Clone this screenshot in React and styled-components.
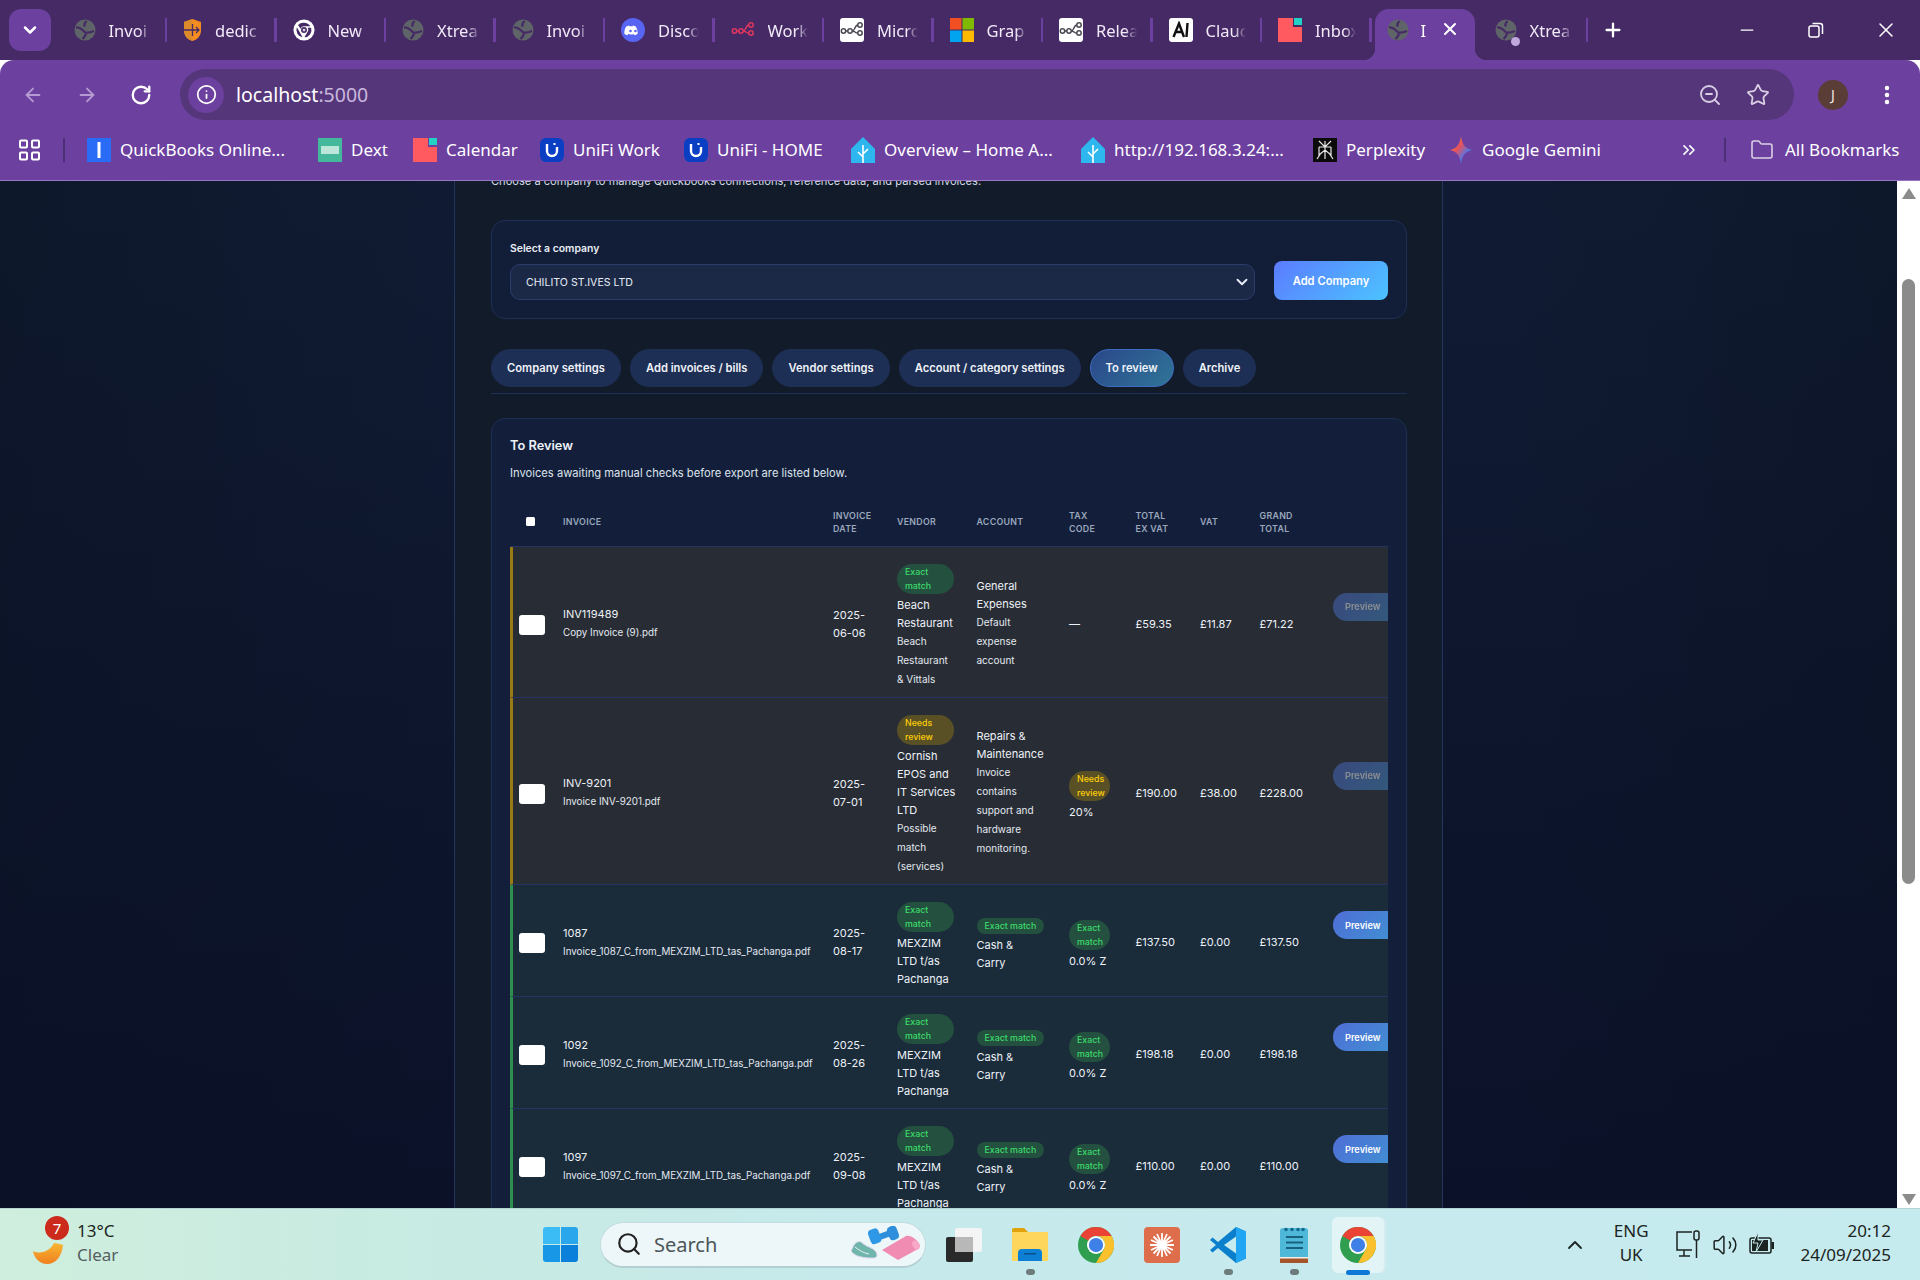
import React from 'react';
import styled, { createGlobalStyle } from 'styled-components';
import {
  ArrowLeft, ArrowRight, RotateCw, Info, ZoomOut, Star, MoreVertical, X, Minus, Plus,
  ChevronDown, ChevronsRight, Folder, Search as SearchIcon, ChevronUp, Volume2,
} from 'lucide-react';

const GlobalStyle = createGlobalStyle`
  html, body { margin: 0; padding: 0; height: 100%; overflow: hidden; }
  #root { height: 1280px; }
  * { box-sizing: border-box; }
`;

const uiFont = '"Noto Sans", "Open Sans", sans-serif';
const pageFont = 'Inter, "Liberation Sans", sans-serif';

/* ---------- little logos ---------- */

const Globe = ({ size = 22 }) => (
  <svg width={size} height={size} viewBox="0 0 22 22">
    <circle cx="11" cy="11" r="10.500" fill="#5f6468" />
    <path d="M2 8.500c4-1 6 2 8 4s5 1.500 10-.5M12.500 2c-1.500 2-3.500 3-1.500 5.500M8.500 20c1.500-2 3.500-3 3.500-6.500" stroke="#452a65" strokeWidth="2.200" fill="none" />
  </svg>
);

const ChromeLogo = ({ size = 36 }) => (
  <svg width={size} height={size} viewBox="0 0 48 48">
    <circle cx="24" cy="24" r="24" fill="#2f9e4f" />
    <path d="M24 0a24 24 0 0 1 20.800 12H24a12 12 0 0 0-10.400 6L3.200 12A24 24 0 0 1 24 0z" fill="#ea4335" />
    <path d="M44.800 12A24 24 0 0 1 24 48l10.400-18A12 12 0 0 0 24 12z" fill="#fbc02d" />
    <circle cx="24" cy="24" r="12" fill="#fff" />
    <circle cx="24" cy="24" r="9.500" fill="#3f7fe8" />
  </svg>
);

const ChromeMono = () => (
  <svg width="22" height="22" viewBox="0 0 48 48">
    <circle cx="24" cy="24" r="23" fill="#fff" />
    <path d="M24 8a16 16 0 0 1 13.800 8H24a8 8 0 0 0-7.500 5l-5.500-8A16 16 0 0 1 24 8zM8.500 18l8 14 4.500 7.800A16 16 0 0 1 8.500 18zM39.500 19a16 16 0 0 1-14.500 21l7-12a8 8 0 0 0 0-9z" fill="#452a65" />
    <circle cx="24" cy="24" r="6.500" fill="#452a65" />
    <circle cx="24" cy="24" r="3" fill="#d9d4e0" />
  </svg>
);

const Shield = () => (
  <svg width="19" height="24" viewBox="0 0 19 24">
    <path d="M9.500 1l8.500 3v8c0 6-3.500 9.500-8.500 11C4.500 21.500 1 18 1 12V4z" fill="#f58c1f" />
    <path d="M9.500 1v22C4.500 21.500 1 18 1 12V4z" fill="#dc8a2a" />
    <path d="M1 12h15M9.500 6v12M13 9l3 3-3 3" stroke="#452a65" strokeWidth="1.300" fill="none" />
  </svg>
);

const DiscordLogo = () => (
  <svg width="24" height="24" viewBox="0 0 24 24">
    <circle cx="12" cy="12" r="12" fill="#5865f2" />
    <path d="M8 7.500c-1 .2-2 .5-2.800 1-1.500 2.500-2 5-1.800 7.300 1 .8 2 1.200 3 1.500l.8-1.200c1.500.5 4 .8 5.600 0l.8 1.200c1-.3 2-.7 3-1.500.2-2.600-.4-5-1.800-7.300-.8-.5-1.800-.8-2.800-1l-.4.8c-1-.2-2.200-.2-3.200 0z" fill="#fff" />
    <circle cx="9.500" cy="13" r="1.300" fill="#5865f2" />
    <circle cx="14.500" cy="13" r="1.300" fill="#5865f2" />
  </svg>
);

const FlowMark = ({ color = '#e0365f' }) => (
  <svg width="24" height="24" viewBox="0 0 24 24" fill="none" stroke={color} strokeWidth="1.500">
    <circle cx="3.500" cy="13" r="2.200" />
    <circle cx="10" cy="13" r="2.200" />
    <circle cx="20" cy="7" r="2.200" />
    <circle cx="20" cy="15" r="2.200" />
    <path d="M5.700 13h2.100M12.200 13c3 0 2.500-6 5.600-6M12.200 13c3 0 2.500 2 5.600 2" />
  </svg>
);

const WhiteTile = styled.span`
  width: 24px;
  height: 24px;
  border-radius: 3px;
  background: #fff;
  display: flex;
  align-items: center;
  justify-content: center;
  flex: none;
`;

const FlowTile = () => (
  <WhiteTile><FlowMark color="#4b4b55" /></WhiteTile>
);

const ClaudeTile = () => (
  <WhiteTile>
    <svg width="18" height="18" viewBox="0 0 18 18" fill="none" stroke="#111" strokeWidth="2.400">
      <path d="M1.500 16L7 2.500 12 16M4 11h6M15.500 2l-1 14" />
    </svg>
  </WhiteTile>
);

const MsLogo = () => (
  <svg width="24" height="24" viewBox="0 0 24 24">
    <rect width="11.500" height="11.500" fill="#f25022" />
    <rect x="12.500" width="11.500" height="11.500" fill="#7fba00" />
    <rect y="12.500" width="11.500" height="11.500" fill="#00a4ef" />
    <rect x="12.500" y="12.500" width="11.500" height="11.500" fill="#ffb900" />
  </svg>
);

const CalLogo = () => (
  <svg width="24" height="24" viewBox="0 0 24 24">
    <path d="M0 0h15v9h9v15H0z" fill="#ff5a5f" />
    <rect x="16" width="8" height="7" fill="#22d3c5" />
  </svg>
);

const QbLogo = () => (
  <svg width="24" height="24" viewBox="0 0 24 24">
    <rect width="24" height="24" fill="#2b6cf6" />
    <rect x="10.500" y="4" width="3" height="16" fill="#fff" />
  </svg>
);

const DextLogo = () => (
  <svg width="24" height="24" viewBox="0 0 24 24">
    <rect width="24" height="24" fill="#44b89a" />
    <rect x="3" y="8" width="18" height="8" fill="#e6f6f0" opacity=".75" />
  </svg>
);

const UnifiLogo = () => (
  <svg width="24" height="24" viewBox="0 0 24 24">
    <rect width="24" height="24" rx="6" fill="#0a3fc4" />
    <path d="M7 6v7a5 5 0 0 0 10 0V9" fill="none" stroke="#fff" strokeWidth="2.400" />
    <rect x="13.500" y="5" width="2" height="2" fill="#fff" />
  </svg>
);

const HomeLogo = () => (
  <svg width="24" height="26" viewBox="0 0 24 26">
    <path d="M12 0l12 12v14H0V12z" fill="#2db7ee" />
    <path d="M12 8v18M12 20l-5-5M12 17l5-5" stroke="#fff" strokeWidth="1.600" fill="none" />
  </svg>
);

const PerplexityLogo = () => (
  <svg width="24" height="24" viewBox="0 0 24 24">
    <rect width="24" height="24" fill="#0b0b0b" />
    <path d="M12 3v18M6 3l6 6 6-6M6 9h12M6 9v8l6-5 6 5V9M4 21l4-6M20 21l-4-6" fill="none" stroke="#e8e8e8" strokeWidth="1.200" />
  </svg>
);

const GeminiLogo = () => (
  <svg width="24" height="28" viewBox="0 0 24 28">
    <defs>
      <linearGradient id="gem" x1="0" y1="0" x2="1" y2="1">
        <stop offset="0" stopColor="#f4a52e" />
        <stop offset=".4" stopColor="#e8505b" />
        <stop offset=".7" stopColor="#4b7bec" />
        <stop offset="1" stopColor="#34a853" />
      </linearGradient>
    </defs>
    <path d="M12 0c1 8 4 12.500 11 14-7 1.500-10 6-11 14-1-8-4-12.500-11-14 7-1.500 10-6 11-14z" fill="url(#gem)" />
  </svg>
);

const GridDots = () => (
  <svg width="24" height="22" viewBox="0 0 24 22" fill="none" stroke="#fff" strokeWidth="2">
    <rect x="2" y="1.500" width="7" height="7" rx="1" />
    <rect x="14" y="1.500" width="7" height="7" rx="1" />
    <rect x="2" y="13.500" width="7" height="7" rx="1" />
    <rect x="14" y="13.500" width="7" height="7" rx="1" />
  </svg>
);

const RestoreGlyph = () => (
  <svg width="18" height="18" viewBox="0 0 18 18" fill="none" stroke="#fff" strokeWidth="1.500">
    <rect x="2" y="5" width="10" height="11" rx="2" />
    <path d="M5.500 2.500H13a2.500 2.500 0 0 1 2.500 2.500v8" />
  </svg>
);

/* ---------- chrome ---------- */

const Shell = styled.div`
  width: 1920px;
  height: 1280px;
  display: flex;
  flex-direction: column;
  overflow: hidden;
  font-family: ${uiFont};
`;

const TabStrip = styled.div`
  height: 60px;
  flex: none;
  background: #452a65;
  display: flex;
  align-items: flex-start;
  padding: 9px 0 0 9px;
  color: #fff;
`;

const TabSearch = styled.div`
  width: 42px;
  height: 42px;
  border-radius: 12px;
  background: #6c409f;
  display: flex;
  align-items: center;
  justify-content: center;
  margin-right: 6.500px;
  flex: none;
`;

const Tab = styled.div`
  width: 109.500px;
  height: 42px;
  flex: none;
  display: flex;
  align-items: center;
  padding: 0 16px;
  gap: 13px;
  font-size: 16.500px;
  color: #f1eaf8;
  position: relative;

  &::after {
    content: '';
    position: absolute;
    right: 0;
    top: 9px;
    width: 2.500px;
    height: 24px;
    background: #6c409f;
  }
`;

const TabLabel = styled.span`
  white-space: nowrap;
  flex: 1;
  min-width: 0;
  mask-image: linear-gradient(90deg, #000 72%, transparent 100%);
`;

const FaviconBox = styled.span`
  position: relative;
  display: flex;
  flex: none;
`;

const ActiveTab = styled.div`
  position: relative;
  width: 100px;
  height: 51px;
  flex: none;
  margin: 0 4px 0 3px;
  background: #6c409f;
  border-radius: 14px 14px 0 0;
  display: flex;
  align-items: flex-start;
  padding: 10px 15px 0 12px;
  gap: 12px;
  font-size: 16.500px;

  &::before, &::after {
    content: '';
    position: absolute;
    bottom: 0;
    width: 12px;
    height: 12px;
  }
  &::before {
    left: -12px;
    background: radial-gradient(circle at 0 0, transparent 12px, #6c409f 12.500px);
  }
  &::after {
    right: -12px;
    background: radial-gradient(circle at 100% 0, transparent 12px, #6c409f 12.500px);
  }
`;

const AudioDot = styled.span`
  position: absolute;
  right: -3px;
  bottom: -5px;
  width: 9px;
  height: 9px;
  border-radius: 50%;
  background: #c0a8dc;
`;

const NewTab = styled.div`
  width: 30px;
  height: 42px;
  display: flex;
  align-items: center;
  justify-content: center;
  margin-left: 10px;
`;

const WindowControls = styled.div`
  margin-left: auto;
  display: flex;
  height: 42px;
  align-items: center;
  padding-right: 22px;
  gap: 49.500px;
`;

const Toolbar = styled.div`
  height: 60px;
  flex: none;
  background: #6c409f;
  border-radius: 14px 14px 0 0;
  display: flex;
  align-items: center;
  color: #fff;
  padding: 9px 0 0 22px;
`;

const NavIcons = styled.div`
  display: flex;
  gap: 32px;
  align-items: center;
  width: 158px;
  flex: none;
`;

const Omnibox = styled.div`
  width: 1614px;
  height: 51px;
  border-radius: 26px;
  background: #55367b;
  display: flex;
  align-items: center;
  padding: 0 13px 0 8px;
  font-size: 19.500px;
`;

const InfoCircle = styled.span`
  width: 36px;
  height: 36px;
  border-radius: 50%;
  background: #6c409f;
  display: flex;
  align-items: center;
  justify-content: center;
  margin-right: 12px;
  flex: none;
`;

const Host = styled.span`
  color: #fff;
  span { color: #c9b8dd; }
`;

const OmniActions = styled.div`
  margin-left: auto;
  display: flex;
  align-items: center;
  gap: 24px;
  padding-right: 11px;
`;

const Avatar = styled.span`
  width: 30px;
  height: 30px;
  border-radius: 50%;
  background: #5a3d36;
  color: #f3e9e4;
  font-size: 14px;
  display: flex;
  align-items: center;
  justify-content: center;
  margin-left: 24px;
  flex: none;
`;

const Kebab = styled(MoreVertical)`
  margin-left: 27px;
  flex: none;
`;

const Bookmarks = styled.div`
  height: 61px;
  flex: none;
  background: #6c409f;
  border-bottom: 1px solid #9a74c4;
  display: flex;
  align-items: center;
  padding: 0 0 1px 18px;
  color: #fff;
  font-size: 17px;
`;

const BarSep = styled.span`
  width: 2px;
  height: 24px;
  background: #4d2f76;
  flex: none;
  margin: ${(p) => p.$margin};
`;

const Bookmark = styled.div`
  width: ${(p) => p.$w}px;
  display: flex;
  align-items: center;
  gap: 9px;
  flex: none;
  white-space: nowrap;
`;

const MoreBookmarks = styled(ChevronsRight)`
  margin-left: 2px;
  flex: none;
`;

const AllFolder = styled(Folder)`
  flex: none;
`;

const AllLabel = styled.span`
  margin-left: 11px;
  white-space: nowrap;
`;

/* ---------- page ---------- */

const Viewport = styled.div`
  flex: 1;
  min-height: 0;
  display: flex;
  overflow: hidden;
`;

const Page = styled.div`
  flex: 1;
  min-width: 0;
  background:
    linear-gradient(180deg, rgba(16, 27, 51, 0) 0%, rgba(9, 14, 36, .75) 100%),
    linear-gradient(90deg, #0e182b 0%, #101b33 24%, #101b33 80%, #0e182b 100%);
  display: flex;
  justify-content: center;
  font-family: ${pageFont};
  color: #e8edf5;
`;

const Column = styled.div`
  width: 989px;
  flex: none;
  background: #111b29;
  border-left: 1px solid #22355f;
  border-right: 1px solid #22355f;
  padding: 0 35px 0 36px;
`;

const Intro = styled.p`
  margin: -8px 0 31px;
  font-size: 11.100px;
  line-height: 16px;
  color: #d6dce6;
`;

const Card = styled.section`
  border: 1px solid #1e2f55;
  border-radius: 14px;
  background: ${(p) => p.$bg || '#121e38'};
  padding: 18px;
`;

const CompanyRow = styled.div`
  display: flex;
  align-items: flex-end;
  gap: 19px;
`;

const CompanyField = styled.div`
  flex: 1;
`;

const FieldLabel = styled.div`
  font-size: 10.400px;
  font-weight: 600;
  line-height: 18px;
  margin: 1px 0 6px;
  color: #e8edf5;
`;

const SelectBox = styled.div`
  height: 36px;
  border: 1px solid #2a3d6a;
  border-radius: 10px;
  background: #1b2947;
  display: flex;
  align-items: center;
  justify-content: space-between;
  padding: 0 3px 0 15px;
  font-size: 10.600px;
  color: #e8edf5;
`;

const AddButton = styled.button`
  width: 114px;
  height: 39px;
  border: 0;
  border-radius: 8px;
  background: linear-gradient(135deg, #5b7cff, #4cc3ff);
  color: #fff;
  font-family: inherit;
  font-size: 11.200px;
  font-weight: 600;
  flex: none;
`;

const PillRow = styled.nav`
  display: flex;
  gap: 9px;
  margin-top: 30px;
  padding-bottom: 6px;
  border-bottom: 1px solid #1e2f55;
`;

const Pill = styled.button`
  height: 38px;
  padding: 0 15px;
  border-radius: 19px;
  border: 1px solid ${(p) => (p.$active ? '#3f6cc0' : '#1e2f55')};
  background: ${(p) => (p.$active ? 'linear-gradient(135deg, #2b478a, #2f7598)' : '#1e2f55')};
  color: #eef2f8;
  font-family: inherit;
  font-size: 11.200px;
  font-weight: 600;
  white-space: nowrap;
`;

const ReviewCard = styled(Card)`
  margin-top: 24px;
  padding-bottom: 40px;
`;

const ReviewTitle = styled.h2`
  margin: 1px 0 11px;
  font-size: 12.800px;
  line-height: 16px;
  font-weight: 600;
  color: #eef2f8;
`;

const ReviewText = styled.p`
  margin: 0 0 17px;
  font-size: 11.200px;
  line-height: 16px;
  color: #dde3ec;
`;

const TableClip = styled.div`
  width: 878px;
  overflow: hidden;
`;

const Table = styled.table`
  width: 900px;
  table-layout: fixed;
  border-collapse: separate;
  border-spacing: 0;
`;

const Head = styled.th`
  padding: 0 10px 1px;
  height: 49px;
  border-bottom: 1px solid #22345f;
  font-size: 8.800px;
  line-height: 13px;
  font-weight: 600;
  letter-spacing: .3px;
  text-align: left;
  text-transform: uppercase;
  color: #9aa7bd;
`;

const HeadCheck = styled.span`
  display: block;
  width: 9px;
  height: 9px;
  margin: 0 0 0 6px;
  background: #fff;
  border-radius: 1.500px;
`;

const Row = styled.tr`
  background: ${(p) => (p.$status === 'ok' ? '#1a2b3a' : '#282d35')};
`;

const Cell = styled.td`
  padding: 11px 10px 8px;
  vertical-align: middle;
  border-bottom: 1px solid #22345f;
  font-size: 11px;
  line-height: 18px;
  color: #eef2f8;
`;

const NarrowCell = styled(Cell)`
  padding-right: ${(p) => p.$right}px;
`;

const CheckCell = styled(Cell)`
  padding: 13px 0 8px 6px;
  border-left: 3px solid ${(p) => (p.$status === 'ok' ? '#2f8f4e' : '#9a7a14')};
`;

const RowCheck = styled.span`
  display: block;
  width: 26px;
  height: 20px;
  border-radius: 3px;
  background: #fff;
`;

const FileName = styled.div`
  font-size: 9.800px;
  line-height: 19px;
  color: #e3e8f0;
  white-space: nowrap;
`;

const Note = styled.div`
  font-size: 10px;
  line-height: 19px;
  color: #e3e8f0;
  max-width: ${(p) => (p.$max ? `${p.$max}px` : 'none')};
`;

const Badge = styled.span`
  display: block;
  width: ${(p) => (p.$w ? `${p.$w}px` : 'fit-content')};
  margin: 6px 0 2px;
  padding: 1px 8px;
  border-radius: 15px;
  font-size: 8.800px;
  line-height: 14px;
  font-weight: 500;
  white-space: ${(p) => (p.$w ? 'normal' : 'nowrap')};
  background: ${(p) => (p.$tone === 'warn' ? '#5a5026' : '#24503f')};
  color: ${(p) => (p.$tone === 'warn' ? '#ffcf06' : '#3ddc6c')};
`;

const PreviewButton = styled.button`
  width: 70px;
  height: 28px;
  margin-bottom: 34px;
  display: block;
  text-align: left;
  border: 0;
  border-radius: 14px;
  padding: 0 0 0 12px;
  background: linear-gradient(135deg, #4f6ed6, #3f93d2);
  color: #fff;
  font-family: inherit;
  font-size: 9.200px;
  font-weight: 600;
  opacity: ${(p) => (p.disabled ? 0.45 : 1)};
`;

const Scrollbar = styled.div`
  width: 23px;
  flex: none;
  background: #fff;
  display: flex;
  flex-direction: column;
  align-items: center;
  padding: 7px 0 3px;
`;

const ScrollThumb = styled.div`
  height: 605px;
  width: 13px;
  border-radius: 7px;
  background: #8b8b8b;
  margin: 80px 0 auto;
`;

const ScrollArrow = styled.span`
  width: 0;
  height: 0;
  border-left: 7px solid transparent;
  border-right: 7px solid transparent;
  ${(p) => (p.$down ? 'border-top: 11px solid #8b8b8b;' : 'border-bottom: 11px solid #8b8b8b;')}
`;

/* ---------- taskbar ---------- */

const Taskbar = styled.div`
  height: 72px;
  flex: none;
  background: linear-gradient(90deg, #cfeedd 0%, #c8ebe2 20%, #c6e9ec 45%, #c6ebee 100%);
  border-top: 1px solid #b5d5d3;
  display: flex;
  align-items: center;
  color: #1c2422;
`;

const Weather = styled.div`
  width: 543px;
  flex: none;
  display: flex;
  align-items: center;
  padding-left: 31px;
  gap: 12px;
`;

const MoonWrap = styled.div`
  position: relative;
  width: 34px;
  height: 34px;
  margin-top: 12px;
  flex: none;
`;

const AlertBadge = styled.span`
  position: absolute;
  top: -18px;
  left: 14px;
  width: 24px;
  height: 24px;
  border-radius: 50%;
  background: #cc2a1d;
  color: #fff;
  font-size: 15px;
  display: flex;
  align-items: center;
  justify-content: center;
`;

const WeatherText = styled.div`
  font-size: 17px;
  line-height: 24px;
  margin-top: -4px;
  span { display: block; color: #55605f; }
`;

const WinLogo = styled.div`
  width: 35px;
  height: 35px;
  flex: none;
  display: grid;
  grid-template-columns: 1fr 1fr;
  gap: 1.500px;
  margin-right: 22px;
  span:nth-child(1) { background: #3cbcf4; border-radius: 3px 0 0 0; }
  span:nth-child(2) { background: #2aa6ec; border-radius: 0 3px 0 0; }
  span:nth-child(3) { background: #1797e6; border-radius: 0 0 0 3px; }
  span:nth-child(4) { background: #0a80da; border-radius: 0 0 3px 0; }
`;

const SearchPill = styled.div`
  width: 326px;
  height: 46px;
  flex: none;
  border-radius: 23px;
  background: #edf7f9;
  border: 1px solid #c2dcdf;
  border-bottom: 2px solid #b4cfd2;
  display: flex;
  align-items: center;
  padding: 0 4px 0 15px;
  gap: 12px;
  font-size: 20px;
  color: #4c5557;
`;

const SearchArt = styled.span`
  margin-left: auto;
  display: flex;
`;

const TaskSlot = styled.div`
  position: relative;
  width: ${(p) => p.$w || 66}px;
  height: 56px;
  flex: none;
  display: flex;
  align-items: center;
  justify-content: center;
  border-radius: 6px;
  ${(p) => p.$active && 'background: #e3f4f6; box-shadow: 2px 0 0 #d4ecef; margin-left: 5px;'}
`;

const RunDot = styled.span`
  position: absolute;
  bottom: -2px;
  left: 50%;
  width: ${(p) => (p.$active ? 24 : 9)}px;
  height: ${(p) => (p.$active ? 5 : 6)}px;
  margin-left: ${(p) => (p.$active ? -12 : -4.5)}px;
  border-radius: 4px;
  background: ${(p) => (p.$active ? '#0d78d6' : '#6e7b7d')};
`;

const TaskIcons = styled.div`
  display: flex;
  align-items: center;
  margin-left: 5px;
`;

const Tray = styled.div`
  margin-left: auto;
  display: flex;
  align-items: center;
  padding-right: 29px;
`;

const TrayText = styled.div`
  font-size: 17px;
  line-height: 24px;
  text-align: ${(p) => p.$align};
  margin: ${(p) => p.$margin};
`;

const TrayIcons = styled.div`
  display: flex;
  align-items: center;
  gap: 11px;
`;

/* ---------- data ---------- */

const tabs = [
  { icon: <Globe />, label: 'Invoi' },
  { icon: <Shield />, label: 'dedic' },
  { icon: <ChromeMono />, label: 'New' },
  { icon: <Globe />, label: 'Xtrea' },
  { icon: <Globe />, label: 'Invoi' },
  { icon: <DiscordLogo />, label: 'Disco' },
  { icon: <FlowMark />, label: 'Work' },
  { icon: <FlowTile />, label: 'Micro' },
  { icon: <MsLogo />, label: 'Grap' },
  { icon: <FlowTile />, label: 'Relea' },
  { icon: <ClaudeTile />, label: 'Clauc' },
  { icon: <CalLogo />, label: 'Inbox' },
];

const bookmarks = [
  { icon: <QbLogo />, label: 'QuickBooks Online...', w: 231 },
  { icon: <DextLogo />, label: 'Dext', w: 95 },
  { icon: <CalLogo />, label: 'Calendar', w: 127 },
  { icon: <UnifiLogo />, label: 'UniFi Work', w: 144 },
  { icon: <UnifiLogo />, label: 'UniFi - HOME', w: 167 },
  { icon: <HomeLogo />, label: 'Overview – Home A...', w: 230 },
  { icon: <HomeLogo />, label: 'http://192.168.3.24:...', w: 232 },
  { icon: <PerplexityLogo />, label: 'Perplexity', w: 136 },
  { icon: <GeminiLogo />, label: 'Google Gemini', w: 228 },
];

const pills = ['Company settings', 'Add invoices / bills', 'Vendor settings', 'Account / category settings', 'To review', 'Archive'];

const columns = [
  { key: 'check', w: 43 },
  { key: 'invoice', label: 'Invoice', w: 270 },
  { key: 'date', label: <>Invoice<br />date</>, w: 64 },
  { key: 'vendor', label: 'Vendor', w: 79.500 },
  { key: 'account', label: 'Account', w: 92.500 },
  { key: 'tax', label: <>Tax<br />code</>, w: 66.500 },
  { key: 'net', label: <>Total<br />ex VAT</>, w: 64.500 },
  { key: 'vat', label: 'VAT', w: 59.500 },
  { key: 'gross', label: <>Grand<br />total</>, w: 73.500 },
  { key: 'action', w: 87 },
];

const EXACT = 'Exact match';
const NEEDS = 'Needs review';

const mexzim = (id, date, net) => ({
  status: 'ok',
  invoice: id,
  file: `Invoice_${id}_C_from_MEXZIM_LTD_tas_Pachanga.pdf`,
  date,
  vendorBadge: ['ok', EXACT],
  vendor: 'MEXZIM LTD t/as Pachanga',
  accountBadge: ['ok', EXACT],
  account: 'Cash & Carry',
  taxBadge: ['ok', EXACT],
  tax: '0.0% Z',
  net,
  vat: '£0.00',
  gross: net,
});

const rows = [
  {
    status: 'warn',
    invoice: 'INV119489',
    file: 'Copy Invoice (9).pdf',
    date: '2025-06-06',
    vendorBadge: ['ok', EXACT],
    vendor: 'Beach Restaurant',
    vendorNote: 'Beach Restaurant & Vittals',
    account: 'General Expenses',
    accountNote: 'Default expense account',
    tax: '—',
    net: '£59.35',
    vat: '£11.87',
    gross: '£71.22',
    locked: true,
  },
  {
    status: 'warn',
    invoice: 'INV-9201',
    file: 'Invoice INV-9201.pdf',
    date: '2025-07-01',
    vendorBadge: ['warn', NEEDS],
    vendor: 'Cornish EPOS and IT Services LTD',
    vendorNote: 'Possible match (services)',
    account: 'Repairs & Maintenance',
    accountNote: 'Invoice contains support and hardware monitoring.',
    taxBadge: ['warn', NEEDS],
    tax: '20%',
    net: '£190.00',
    vat: '£38.00',
    gross: '£228.00',
    locked: true,
  },
  mexzim('1087', '2025-08-17', '£137.50'),
  mexzim('1092', '2025-08-26', '£198.18'),
  mexzim('1097', '2025-09-08', '£110.00'),
];

const Moon = () => (
  <svg width="34" height="34" viewBox="0 0 34 34">
    <defs>
      <linearGradient id="moon" x1="0" y1="0" x2="0" y2="1">
        <stop offset="0" stopColor="#f7b733" />
        <stop offset="1" stopColor="#f0801f" />
      </linearGradient>
    </defs>
    <path d="M2 17c5 3 16 2 21-8 2 0 6 1 9 2-1 11-7 19-16 19C9 30 3 24 2 17z" fill="url(#moon)" />
  </svg>
);

const FitnessArt = () => (
  <svg width="70" height="36" viewBox="0 0 70 36">
    <path d="M0 25l3-6c2-3 5-4 7-3 3 3 8 5 12 7 3 2 4 4 4 7-1 2-3 2-6 2C12 32 3 30 0 25z" fill="#6fb5ac" stroke="#dcd3ea" strokeWidth="1" />
    <path d="M4 21c4 3 8 6 14 7" stroke="#e5f3ef" strokeWidth="1" fill="none" />
    <rect x="24" y="6" width="20" height="6" fill="#2f8fdc" transform="rotate(-20 34 9)" />
    <rect x="18" y="3" width="11" height="15" rx="4" fill="#2f98e6" transform="rotate(-20 23 10)" />
    <rect x="37" y="0" width="10" height="14" rx="4" fill="#2f8fdc" transform="rotate(-20 42 7)" />
    <path d="M31 24L55 10c5-1 12 4 14 10l-2 3-20 11z" fill="#f08cb2" />
    <ellipse cx="65" cy="19" rx="3.500" ry="5" fill="#f7a8c6" transform="rotate(-30 65 19)" />
  </svg>
);

const FolderLogo = () => (
  <svg width="36" height="33" viewBox="0 0 36 33">
    <path d="M0 2a2 2 0 0 1 2-2h10l4 4h20v10H0z" fill="#e0a30c" />
    <rect y="4" width="36" height="29" fill="#ffd65c" />
    <path d="M6 33v-8a4 4 0 0 1 4-4h16a4 4 0 0 1 4 4v8z" fill="#0d7fd4" />
    <rect x="12" y="25" width="12" height="1.500" fill="#0a4f8c" />
  </svg>
);

const ClaudeApp = () => (
  <svg width="36" height="36" viewBox="0 0 36 36">
    <rect width="36" height="36" rx="4" fill="#dd6d4b" />
    <path d="M18 6v24M6 18h24M9.500 9.500l17 17M26.500 9.500l-17 17M13 7l10 22M23 7L13 29M7 13l22 10M29 13L7 23" stroke="#fff" strokeWidth="1.800" />
    <circle cx="18" cy="18" r="4" fill="#fff" />
  </svg>
);

const VsCode = () => (
  <svg width="36" height="36" viewBox="0 0 36 36">
    <path d="M26 0l10 4.500v27L26 36 8 21l-5.500 4.500L0 23l6-5-6-5 2.500-2.500L8 15z" fill="#0b7fcb" />
    <path d="M26 0l10 4.500v27L26 36z" fill="#22a5f2" />
    <path d="M26 9.500L14 18l12 8.500z" fill="#c6ebee" />
  </svg>
);

const Notepad = () => (
  <svg width="28" height="36" viewBox="0 0 28 36">
    <rect y="1" width="28" height="31" rx="3" fill="#4fb8d8" />
    <rect y="31" width="28" height="5" fill="#a5552a" />
    <rect y="30" width="28" height="1.500" fill="#f5f0e8" />
    <circle cx="6" cy="2.500" r="1.800" fill="#136a8f" />
    <circle cx="12" cy="2.500" r="1.800" fill="#136a8f" />
    <circle cx="18" cy="2.500" r="1.800" fill="#136a8f" />
    <circle cx="23" cy="2.500" r="1.800" fill="#136a8f" />
    <path d="M6 10h17M6 15.500h17M6 21h17" stroke="#17617f" strokeWidth="1.800" />
  </svg>
);

const TaskView = () => (
  <svg width="36" height="34" viewBox="0 0 36 34">
    <rect x="9" width="27" height="24" rx="2" fill="#f4f4f4" />
    <rect y="9" width="27" height="25" rx="2" fill="#2a2a2a" />
    <rect x="9" y="9" width="18" height="15" fill="#b8b8b8" />
  </svg>
);

const NetworkIcon = () => (
  <svg width="26" height="30" viewBox="0 0 26 30" fill="none" stroke="#1c2422" strokeWidth="1.500">
    <path d="M17 2H2v18h15M9 20v6M4 26h11" />
    <rect x="19" y="1" width="5" height="9" rx="2" />
    <path d="M21.500 10v18" />
  </svg>
);

const BatteryIcon = () => (
  <svg width="26" height="30" viewBox="0 0 26 30" fill="none">
    <rect x="1" y="8" width="21" height="15" rx="2" stroke="#1c2422" strokeWidth="1.500" />
    <rect x="22.500" y="12" width="2.500" height="7" fill="#1c2422" />
    <rect x="3" y="10" width="16" height="11" fill="#1c2422" />
    <path d="M9 2L4 13h5l-2 9 7-12H9z" fill="#1c2422" stroke="#c6ebee" />
  </svg>
);

const StackedText = ({ text, note, badge, badgeWidth, noteMax }) => (
  <>
    {badge && <Badge $tone={badge[0] === 'warn' ? 'warn' : 'ok'} $w={badgeWidth}>{badge[1]}</Badge>}
    {text && <div>{text}</div>}
    {note && <Note $max={noteMax}>{note}</Note>}
  </>
);

export default function App() {
  return (
    <Shell>
      <GlobalStyle />
      <TabStrip>
        <TabSearch><ChevronDown size={20} strokeWidth={3} /></TabSearch>
        {tabs.map((t, i) => (
          <Tab key={i}>
            <FaviconBox>{t.icon}</FaviconBox>
            <TabLabel>{t.label}</TabLabel>
          </Tab>
        ))}
        <ActiveTab>
          <FaviconBox><Globe /></FaviconBox>
          <TabLabel>I</TabLabel>
          <X size={20} strokeWidth={2.500} />
        </ActiveTab>
        <Tab>
          <FaviconBox><Globe /><AudioDot /></FaviconBox>
          <TabLabel>Xtrea</TabLabel>
        </Tab>
        <NewTab><Plus size={22} strokeWidth={2.500} /></NewTab>
        <WindowControls>
          <Minus size={20} strokeWidth={1.500} />
          <RestoreGlyph />
          <X size={24} strokeWidth={1.500} />
        </WindowControls>
      </TabStrip>

      <Toolbar>
        <NavIcons>
          <ArrowLeft size={22} color="#b49ad0" />
          <ArrowRight size={22} color="#b49ad0" />
          <RotateCw size={22} strokeWidth={2.500} />
        </NavIcons>
        <Omnibox>
          <InfoCircle><Info size={21} /></InfoCircle>
          <Host>localhost<span>:5000</span></Host>
          <OmniActions>
            <ZoomOut size={24} color="#d9cfe4" strokeWidth={1.800} />
            <Star size={24} color="#d9cfe4" strokeWidth={1.800} />
          </OmniActions>
        </Omnibox>
        <Avatar>J</Avatar>
        <Kebab size={24} strokeWidth={2.500} />
      </Toolbar>

      <Bookmarks>
        <GridDots />
        <BarSep $margin="0 22px 0 21px" />
        {bookmarks.map((b) => (
          <Bookmark key={b.label} $w={b.w}>
            {b.icon}
            <span>{b.label}</span>
          </Bookmark>
        ))}
        <MoreBookmarks size={20} strokeWidth={2} />
        <BarSep $margin="0 24px 0 25px" />
        <AllFolder size={24} color="#d9cfe4" strokeWidth={1.600} />
        <AllLabel>All Bookmarks</AllLabel>
      </Bookmarks>

      <Viewport>
        <Page>
          <Column>
            <Intro>Choose a company to manage Quickbooks connections, reference data, and parsed invoices.</Intro>
            <Card>
              <CompanyRow>
                <CompanyField>
                  <FieldLabel>Select a company</FieldLabel>
                  <SelectBox>
                    CHILITO ST.IVES LTD
                    <ChevronDown size={18} strokeWidth={2.500} />
                  </SelectBox>
                </CompanyField>
                <AddButton>Add Company</AddButton>
              </CompanyRow>
            </Card>

            <PillRow>
              {pills.map((p) => (
                <Pill key={p} $active={p === 'To review'}>{p}</Pill>
              ))}
            </PillRow>

            <ReviewCard $bg="#131f3a">
              <ReviewTitle>To Review</ReviewTitle>
              <ReviewText>Invoices awaiting manual checks before export are listed below.</ReviewText>
              <TableClip>
                <Table>
                  <colgroup>
                    {columns.map((c) => <col key={c.key} width={c.w} />)}
                  </colgroup>
                  <thead>
                    <tr>
                      {columns.map((c) => (
                        <Head key={c.key}>
                          {c.key === 'check' ? <HeadCheck /> : c.label}
                        </Head>
                      ))}
                    </tr>
                  </thead>
                  <tbody>
                    {rows.map((r) => (
                      <Row key={r.invoice} $status={r.status}>
                        <CheckCell $status={r.status}><RowCheck /></CheckCell>
                        <Cell>
                          <div>{r.invoice}</div>
                          <FileName>{r.file}</FileName>
                        </Cell>
                        <Cell>{r.date}</Cell>
                        <NarrowCell $right={6}>
                          <StackedText badge={r.vendorBadge} badgeWidth={57} text={r.vendor} note={r.vendorNote} noteMax={56} />
                        </NarrowCell>
                        <NarrowCell $right={16}>
                          <StackedText badge={r.accountBadge} text={r.account} note={r.accountNote} />
                        </NarrowCell>
                        <Cell>
                          <StackedText badge={r.taxBadge} badgeWidth={41} text={r.tax} />
                        </Cell>
                        <Cell>{r.net}</Cell>
                        <Cell>{r.vat}</Cell>
                        <Cell>{r.gross}</Cell>
                        <Cell>
                          <PreviewButton disabled={r.locked}>Preview</PreviewButton>
                        </Cell>
                      </Row>
                    ))}
                  </tbody>
                </Table>
              </TableClip>
            </ReviewCard>
          </Column>
        </Page>
        <Scrollbar>
          <ScrollArrow />
          <ScrollThumb />
          <ScrollArrow $down />
        </Scrollbar>
      </Viewport>

      <Taskbar>
        <Weather>
          <MoonWrap>
            <Moon />
            <AlertBadge>7</AlertBadge>
          </MoonWrap>
          <WeatherText>13°C<span>Clear</span></WeatherText>
        </Weather>
        <WinLogo><span /><span /><span /><span /></WinLogo>
        <SearchPill>
          <SearchIcon size={26} color="#222" strokeWidth={2} />
          Search
          <SearchArt><FitnessArt /></SearchArt>
        </SearchPill>
        <TaskIcons>
          <TaskSlot><TaskView /></TaskSlot>
          <TaskSlot><FolderLogo /><RunDot /></TaskSlot>
          <TaskSlot><ChromeLogo /></TaskSlot>
          <TaskSlot><ClaudeApp /></TaskSlot>
          <TaskSlot><VsCode /><RunDot /></TaskSlot>
          <TaskSlot><Notepad /><RunDot /></TaskSlot>
          <TaskSlot $w={52} $active><ChromeLogo /><RunDot $active /></TaskSlot>
        </TaskIcons>
        <Tray>
          <ChevronUp size={24} strokeWidth={1.800} />
          <TrayText $align="center" $margin="-4px 26px 0 27px">ENG<br />UK</TrayText>
          <TrayIcons>
            <NetworkIcon />
            <Volume2 size={26} strokeWidth={1.400} />
            <BatteryIcon />
          </TrayIcons>
          <TrayText $align="right" $margin="-4px 0 0 26px">20:12<br />24/09/2025</TrayText>
        </Tray>
      </Taskbar>
    </Shell>
  );
}
